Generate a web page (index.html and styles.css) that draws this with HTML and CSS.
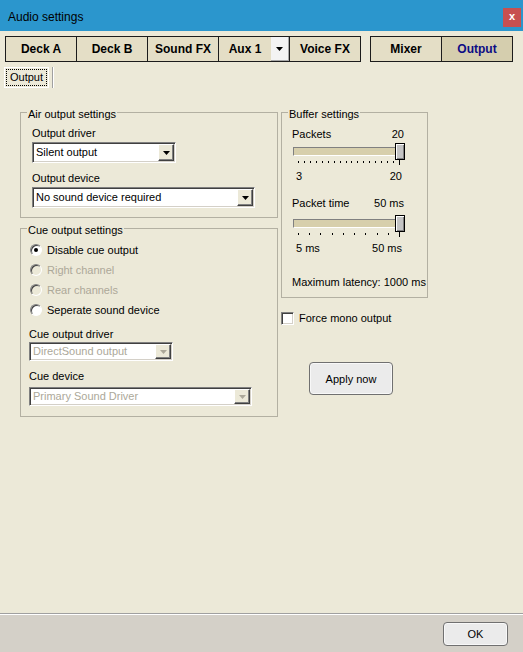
FILE: index.html
```html
<!DOCTYPE html>
<html lang="en">

<head>
  <meta charset="UTF-8">
  <title>Audio settings</title>
  <link rel="stylesheet" href="styles.css">
</head>

<body>
  <div class="window">
    <div class="titlebar">
      <span class="title">Audio settings</span>
      <span class="close">x</span>
    </div>

    <div class="main">
      <div class="tabbar">
        <div class="tabgroup">
          <div class="tab">Deck A</div>
          <div class="tab">Deck B</div>
          <div class="tab">Sound FX</div>
          <div class="tab tab-aux">
            <span class="tab-label">Aux 1</span>
            <span class="aux-arrow"><svg width="7" height="4" viewBox="0 0 7 4"><path d="M0 0h7L3.5 4z" fill="#000"/></svg></span>
          </div>
          <div class="tab">Voice FX</div>
        </div>
        <div class="tabgroup">
          <div class="tab">Mixer</div>
          <div class="tab active">Output</div>
        </div>
      </div>

      <div class="subtabs">
        <span class="subtab"><span class="focus">Output</span></span>
        <span class="subtab-sep"></span>
      </div>

      <div class="panels">
        <div class="col-left">
          <fieldset class="group group-air">
            <legend>Air output settings</legend>
            <div class="field-label first">Output driver</div>
            <div class="select select-short">
              <span class="select-text">Silent output</span>
              <span class="select-btn"><svg width="7" height="4" viewBox="0 0 7 4"><path d="M0 0h7L3.5 4z"/></svg></span>
            </div>
            <div class="field-label">Output device</div>
            <div class="select select-long">
              <span class="select-text">No sound device required</span>
              <span class="select-btn"><svg width="7" height="4" viewBox="0 0 7 4"><path d="M0 0h7L3.5 4z"/></svg></span>
            </div>
          </fieldset>

          <fieldset class="group group-cue">
            <legend>Cue output settings</legend>
            <div class="radios">
              <div class="radio-row"><span class="radio checked"></span>Disable cue output</div>
              <div class="radio-row disabled"><span class="radio"></span>Right channel</div>
              <div class="radio-row disabled"><span class="radio"></span>Rear channels</div>
              <div class="radio-row"><span class="radio"></span>Seperate sound device</div>
            </div>
            <div class="field-label">Cue output driver</div>
            <div class="select select-short small disabled">
              <span class="select-text">DirectSound output</span>
              <span class="select-btn"><svg width="7" height="4" viewBox="0 0 7 4"><path d="M0 0h7L3.5 4z"/></svg></span>
            </div>
            <div class="field-label">Cue device</div>
            <div class="select select-long small disabled">
              <span class="select-text">Primary Sound Driver</span>
              <span class="select-btn"><svg width="7" height="4" viewBox="0 0 7 4"><path d="M0 0h7L3.5 4z"/></svg></span>
            </div>
          </fieldset>
        </div>

        <div class="col-right">
          <fieldset class="group group-buffer">
            <legend>Buffer settings</legend>
            <div class="value-row first"><span>Packets</span><span>20</span></div>
            <div class="slider">
              <span class="track"></span>
              <span class="thumb"></span>
            </div>
            <div class="ticks">
              <i></i><i></i><i></i><i></i><i></i><i></i><i></i><i></i><i></i>
              <i></i><i></i><i></i><i></i><i></i><i></i><i></i><i></i><i></i>
            </div>
            <div class="scale"><span>3</span><span>20</span></div>

            <div class="value-row second"><span>Packet time</span><span>50 ms</span></div>
            <div class="slider">
              <span class="track"></span>
              <span class="thumb"></span>
            </div>
            <div class="ticks">
              <i></i><i></i><i></i><i></i><i></i><i></i><i></i><i></i><i></i><i></i>
            </div>
            <div class="scale"><span>5 ms</span><span>50 ms</span></div>

            <div class="latency">Maximum latency: 1000 ms</div>
          </fieldset>

          <div class="check-row"><span class="check"></span>Force mono output</div>

          <button class="btn btn-apply">Apply now</button>
        </div>
      </div>
    </div>

    <div class="footer">
      <button class="btn btn-ok">OK</button>
    </div>
  </div>
</body>

</html>
```

FILE: styles.css
```css
* {
  box-sizing: border-box;
  margin: 0;
  padding: 0;
}

body {
  font-family: 'Liberation Sans', Arial, sans-serif;
  font-size: 11px;
  line-height: 13px;
  color: #000;
  background: #ece9d8;
}

.window {
  width: 523px;
  height: 652px;
  display: flex;
  flex-direction: column;
  overflow: hidden;
}

/* title bar */

.titlebar {
  height: 31px;
  flex: none;
  background: #2b96cd;
  display: flex;
  justify-content: space-between;
  align-items: flex-start;
  padding-left: 8px;
}

.title {
  font-size: 12px;
  line-height: 30px;
  padding-top: 2px;
}

.close {
  width: 18px;
  height: 19px;
  margin: 8px 2px 0 0;
  background: #c75050;
  color: #fff;
  font-weight: bold;
  font-size: 11px;
  line-height: 17px;
  text-align: center;
}

/* main area */

.main {
  flex: 1;
  padding-top: 5px;
}

.tabbar {
  display: flex;
  gap: 9px;
  height: 26px;
  margin-left: 5px;
}

.tabgroup {
  display: flex;
  border: 1px solid #1c1c1c;
}

.tab {
  width: 70px;
  line-height: 24px;
  text-align: center;
  font-weight: bold;
  font-size: 12px;
  background: #e4dec6;
}

.tab + .tab {
  width: 71px;
  border-left: 1px solid #1c1c1c;
}

.tab.active {
  background: #d5ceae;
  color: #0c0c84;
}

.tab-aux {
  display: flex;
}

.tab-label {
  flex: 1;
}

.aux-arrow {
  width: 18px;
  background: #f3f3f3;
  border-right: 1px solid #a8a8a8;
  border-bottom: 1px solid #a8a8a8;
  display: flex;
  align-items: center;
  justify-content: center;
}

.subtabs {
  display: flex;
  height: 21px;
  margin: 5px 0 0 4px;
}

.subtab {
  border: 1px solid #fff;
  padding: 1px;
}

.subtab .focus {
  display: block;
  border: 1px dotted #000;
  padding: 0 3px;
  line-height: 15px;
}

.subtab-sep {
  width: 2px;
  margin-left: 3px;
  border-left: 1px solid #a0a0a0;
  border-right: 1px solid #fff;
}

/* panels */

.panels {
  display: flex;
  align-items: flex-start;
  margin: 15px 0 0 20px;
}

.col-left {
  width: 258px;
  display: flex;
  flex-direction: column;
  gap: 1px;
}

.col-right {
  width: 147px;
  margin-left: 3px;
  display: flex;
  flex-direction: column;
  align-items: flex-start;
}

.group {
  border: 1px solid #b3b0a2;
  min-width: 0;
  width: 100%;
}

.group legend {
  padding: 5px 1px 0;
  line-height: 13px;
}

.group-air {
  padding: 0 0 9px 11px;
}

.group-air legend {
  margin-left: -5px;
}

.group-air .field-label.first {
  margin-top: 6px;
}

.group-air .field-label {
  margin-top: 9px;
}

.group-air .select {
  margin-top: 2px;
}

.group-cue {
  padding: 0 0 10px 8px;
}

.group-cue legend {
  margin-left: -2px;
}

.group-cue .field-label {
  margin-top: 8px;
}

.group-cue .field-label + .select {
  margin-top: 1px;
}

.group-cue .select + .field-label {
  margin-top: 9px;
}

.group-cue .select.select-long {
  margin-top: 4px;
}

/* select boxes */

.select {
  display: flex;
  height: 21px;
  padding: 1px;
  background: #fff;
  border: 1px solid;
  border-color: #808080 #fff #fff #808080;
  box-shadow: inset 1px 1px 0 #404040, inset -1px -1px 0 #d4d0c8;
}

.select.small {
  height: 19px;
}

.select-short {
  width: 144px;
}

.select-long {
  width: 223px;
}

.select-text {
  flex: 1;
  padding-left: 2px;
  line-height: 17px;
  white-space: nowrap;
}

.select.small .select-text {
  line-height: 15px;
}

.select-btn {
  width: 16px;
  background: #ece9d8;
  border: 1px solid;
  border-color: #fff #404040 #404040 #fff;
  box-shadow: inset -1px -1px 0 #808080;
  display: flex;
  align-items: center;
  justify-content: center;
}

.select.disabled .select-text {
  color: #aca899;
}

.select.disabled .select-btn path {
  fill: #aca899;
}

/* radios and check */

.radios {
  margin-top: 3px;
}

.radio-row {
  display: flex;
  align-items: center;
  gap: 5px;
  height: 20px;
  margin-left: 1px;
}

.radio-row.disabled {
  color: #aca899;
}

.radio {
  width: 12px;
  height: 12px;
  border-radius: 50%;
  background: #fff;
  border: 1px solid;
  border-color: #808080 #fff #fff #808080;
  box-shadow: inset 1px 1px 0 #404040;
  display: flex;
  align-items: center;
  justify-content: center;
}

.radio-row.disabled .radio {
  background: #ece9d8;
}

.radio.checked::after {
  content: "";
  width: 4px;
  height: 4px;
  border-radius: 50%;
  background: #000;
}

.check-row {
  display: flex;
  align-items: center;
  gap: 5px;
  margin-top: 14px;
}

.check {
  width: 13px;
  height: 13px;
  background: #fff;
  border: 1px solid;
  border-color: #808080 #fff #fff #808080;
  box-shadow: inset 1px 1px 0 #404040, inset -1px -1px 0 #d4d0c8;
}

/* buffer sliders */

.group-buffer {
  padding: 0 23px 8px 10px;
}

.group-buffer legend {
  margin-left: -4px;
}

.value-row {
  display: flex;
  justify-content: space-between;
}

.value-row.first {
  margin-top: 7px;
}

.value-row.second {
  margin-top: 14px;
}

.slider {
  display: grid;
  width: 112px;
  height: 17px;
  margin: 2px 0 0 1px;
}

.value-row.second + .slider {
  margin-top: 5px;
}

.track,
.thumb {
  grid-area: 1 / 1;
}

.track {
  height: 9px;
  align-self: center;
  background: #d7cfac;
  border: 1px solid;
  border-color: #808080 #fff #fff #808080;
}

.thumb {
  justify-self: end;
  width: 10px;
  height: 17px;
  background: #c4c4c4;
  border: 1px solid #000;
  box-shadow: inset 1px 1px 0 #fff, inset -1px -1px 0 #808080;
}

.ticks {
  display: flex;
  justify-content: space-between;
  height: 5px;
  margin: 0 4px 0 6px;
}

.ticks i {
  width: 1px;
  height: 2px;
  margin-top: 1px;
  background: #000;
}

.ticks i:last-child {
  height: 5px;
  margin-top: 0;
}

.scale {
  display: flex;
  justify-content: space-between;
  margin: 5px 2px 0 4px;
}

.latency {
  margin-top: 21px;
  white-space: nowrap;
}

/* buttons */

.btn {
  font-family: 'Liberation Sans', Arial, sans-serif;
  font-size: 11px;
  color: #000;
  background: #ebebeb;
  border: 1px solid #707070;
  border-radius: 4px;
  box-shadow: inset 0 0 0 1px #f8f8f8;
}

.btn-apply {
  width: 84px;
  height: 33px;
  margin: 37px 0 0 28px;
}

.btn-ok {
  width: 65px;
  height: 24px;
}

.footer {
  height: 39px;
  flex: none;
  display: flex;
  justify-content: flex-end;
  padding: 8px 15px 0 0;
  background: #d4d0c8;
  border-top: 1px solid #a0a0a0;
  box-shadow: inset 0 1px 0 #fff;
}
```
